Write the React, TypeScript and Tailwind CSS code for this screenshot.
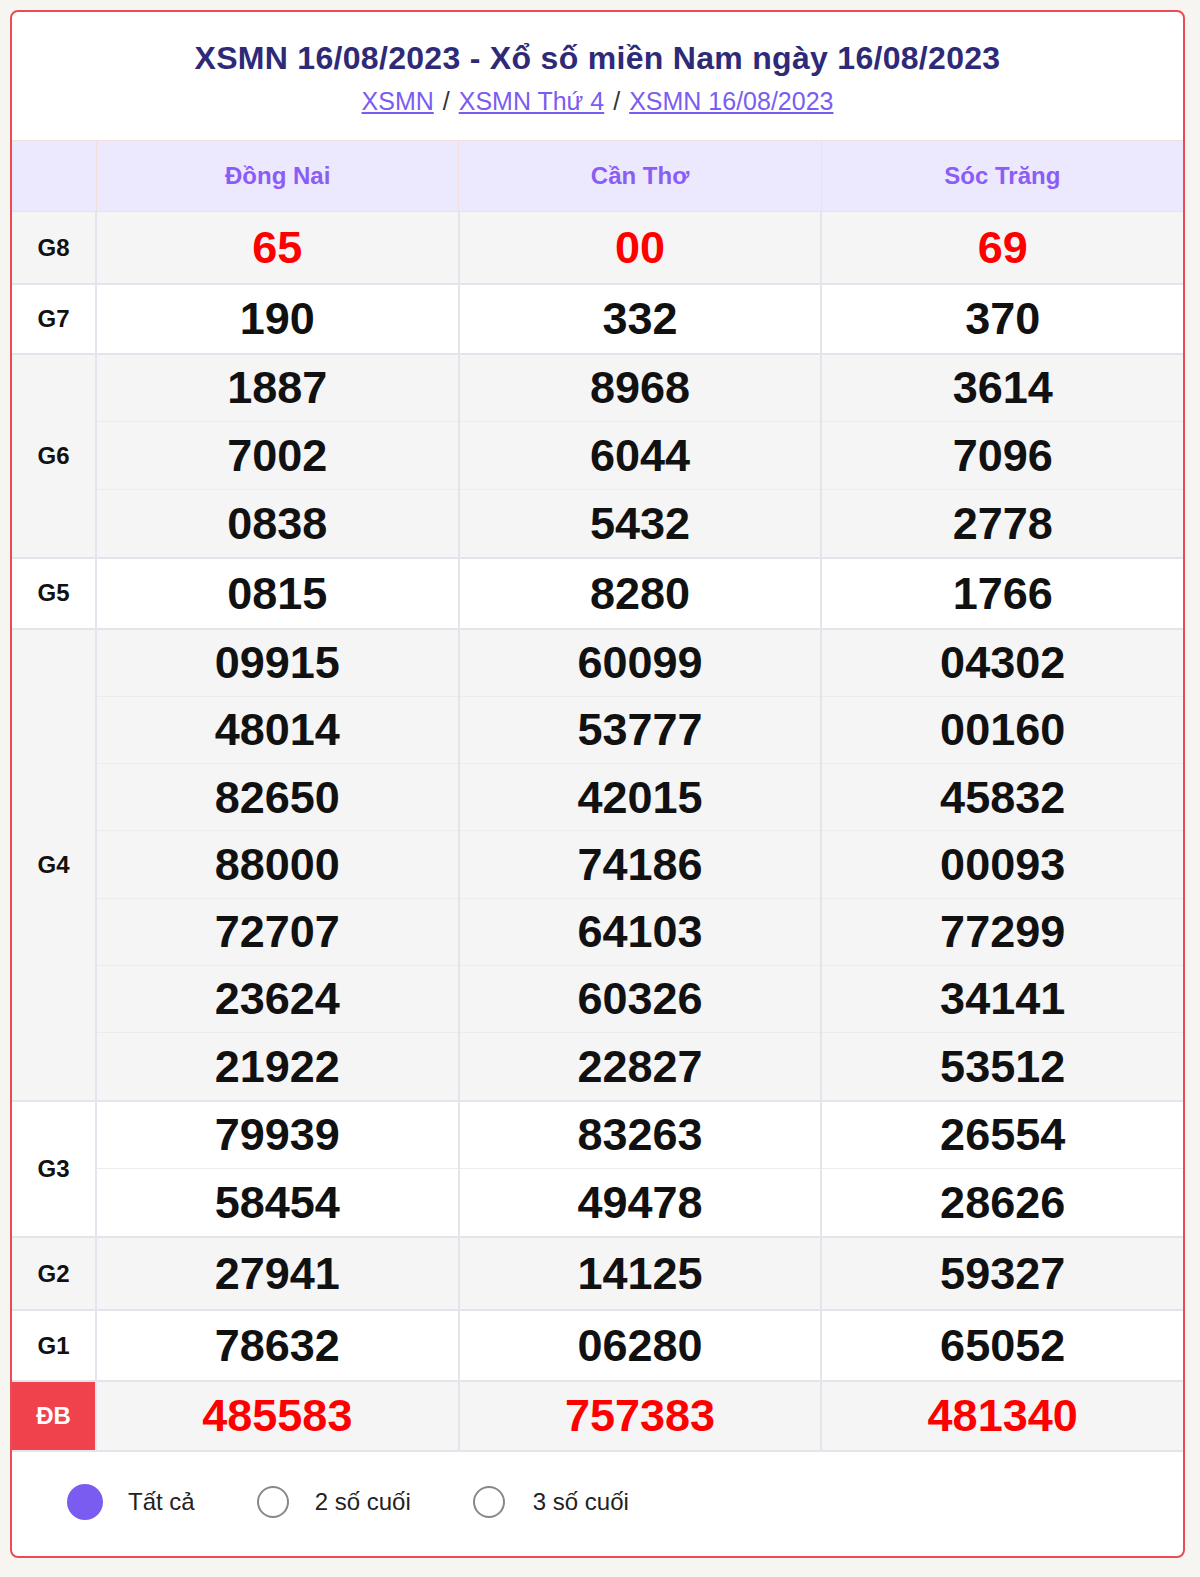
import React from "react";

const groups: { label: string; rows: string[][]; red?: boolean; h: number }[] = [
  { label: "G8", rows: [["65", "00", "69"]], red: true, h: 71 },
  { label: "G7", rows: [["190", "332", "370"]], h: 68 },
  { label: "G6", rows: [["1887", "8968", "3614"], ["7002", "6044", "7096"], ["0838", "5432", "2778"]], h: 67.3 },
  { label: "G5", rows: [["0815", "8280", "1766"]], h: 69 },
  {
    label: "G4",
    rows: [
      ["09915", "60099", "04302"],
      ["48014", "53777", "00160"],
      ["82650", "42015", "45832"],
      ["88000", "74186", "00093"],
      ["72707", "64103", "77299"],
      ["23624", "60326", "34141"],
      ["21922", "22827", "53512"],
    ],
    h: 67.2,
  },
  { label: "G3", rows: [["79939", "83263", "26554"], ["58454", "49478", "28626"]], h: 67 },
  { label: "G2", rows: [["27941", "14125", "59327"]], h: 71 },
  { label: "G1", rows: [["78632", "06280", "65052"]], h: 69 },
  { label: "ĐB", rows: [["485583", "757383", "481340"]], red: true, h: 68 },
];

const font = { fontFamily: '"Liberation Sans", Arial, sans-serif' };

export default function App() {
  return (
    <div className="w-[1200px] h-[1577px] bg-[#f7f5f2] pt-[10px] pl-[10px]" style={font}>
      <div className="w-[1175px] h-[1548px] bg-white border-2 border-[#ea4c52] rounded-[8px] overflow-hidden flex flex-col">
        <div className="h-[128px] flex flex-col items-center pt-[26px]">
          <div className="text-[32px] font-bold text-[#2e2a78] leading-[40px] tracking-[0.3px]">XSMN 16/08/2023 - Xổ số miền Nam ngày 16/08/2023</div>
          <div className="text-[25px] text-[#7b5cf0] mt-[8px] leading-[30px] flex gap-[9px]">
            <span className="underline">XSMN </span>
            <span className="text-[#333]">/</span>
            <span className="underline">XSMN Thứ 4 </span>
            <span className="text-[#333]">/</span>
            <span className="underline">XSMN 16/08/2023</span>
          </div>
        </div>
        <div className="flex h-[72px] bg-[#ece8fd] border-y border-[#f3dede]">
          <div className="w-[85px] border-r border-[#f3dede]" />
          {["Đồng Nai", "Cần Thơ", "Sóc Trăng"].map((n, i) => (
            <div key={n} className={`flex-1 flex items-center justify-center text-[24px] font-bold text-[#8b5cf6] ${i < 2 ? "border-r border-[#f3dede]" : ""}`}>{n}</div>
          ))}
        </div>
        {groups.map((g, gi) => {
          const bg = gi % 2 === 0 ? "bg-[#f5f5f5]" : "bg-white";
          const isDB = g.label === "ĐB";
          return (
            <div key={g.label} className={`flex border-b-2 border-[#e4e4ec] ${bg}`}>
              <div className={`w-[85px] shrink-0 flex items-center justify-center text-[24px] font-bold border-r-2 border-[#e4e4ec] ${isDB ? "bg-[#f0424c] text-white" : "text-[#111]"}`}>{g.label}</div>
              {[0, 1, 2].map((c) => (
                <div key={c} className={`flex-1 flex flex-col ${c < 2 ? "border-r-2 border-[#e4e4ec]" : ""}`}>
                  {g.rows.map((r, ri) => (
                    <div
                      key={ri}
                      style={{ height: g.h }}
                      className={`flex items-center justify-center font-bold text-[45px] ${g.red ? "text-[#f00]" : "text-[#111]"} ${ri < g.rows.length - 1 ? "border-b border-[#ececec]" : ""}`}
                    >
                      {r[c]}
                    </div>
                  ))}
                </div>
              ))}
            </div>
          );
        })}
        <div className="flex items-center pl-[55px] pt-[32px] text-[24px] text-[#222]">
          <span className="w-[36px] h-[36px] rounded-full bg-[#7b5cf0]" />
          <span className="ml-[25px]">Tất cả</span>
          <span className="ml-[62px] w-[32px] h-[32px] rounded-full border-2 border-[#888]" />
          <span className="ml-[26px]">2 số cuối</span>
          <span className="ml-[62px] w-[32px] h-[32px] rounded-full border-2 border-[#888]" />
          <span className="ml-[28px]">3 số cuối</span>
        </div>
      </div>
    </div>
  );
}
